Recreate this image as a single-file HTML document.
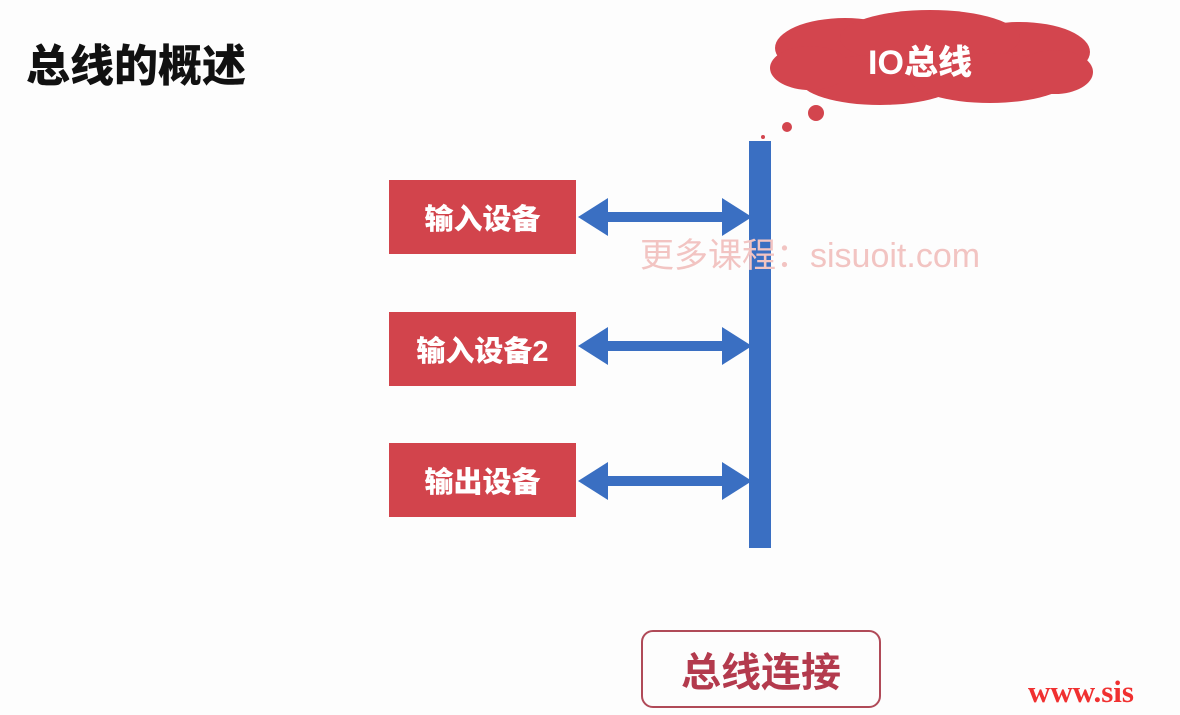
<!DOCTYPE html><html><head><meta charset="utf-8"><style>
body{margin:0;width:1180px;height:715px;background:#fdfdfd;position:relative;overflow:hidden;font-family:"Liberation Sans","Noto Sans CJK SC",sans-serif}
.t{position:absolute;left:26px;top:30px;font-size:44px;font-weight:900;color:#111}
.b{position:absolute;left:389px;width:187px;height:74px;background:#d2444c;color:#fff;font-weight:900;font-size:29px;display:flex;align-items:center;justify-content:center}
.bar{position:absolute;left:749px;top:141px;width:22px;height:407px;background:#3a6fc2}
.wm{position:absolute;left:640px;top:228px;font-size:34px;color:#f2c4c2}
.c{position:absolute;left:641px;top:630px;width:236px;height:74px;border:2px solid #b04a58;border-radius:12px;color:#b33a4d;font-size:40px;font-weight:700;display:flex;align-items:center;justify-content:center}
.w{position:absolute;left:1028px;top:674px;font-family:"Liberation Serif",serif;font-weight:700;font-size:31px;color:#f03030}
</style></head><body>
<div class="t">总线的概述</div>
<svg width="1180" height="715" style="position:absolute;left:0;top:0">
<g fill="#d3454e">
<ellipse cx="930" cy="62" rx="150" ry="30"/>
<ellipse cx="845" cy="48" rx="70" ry="30"/>
<ellipse cx="1020" cy="52" rx="70" ry="30"/>
<ellipse cx="930" cy="38" rx="90" ry="28"/>
<ellipse cx="880" cy="80" rx="80" ry="25"/>
<ellipse cx="990" cy="78" rx="80" ry="25"/>
<ellipse cx="810" cy="68" rx="40" ry="22"/>
<ellipse cx="1055" cy="72" rx="38" ry="22"/>
<circle cx="816" cy="113" r="8"/><circle cx="787" cy="127" r="5"/><circle cx="763" cy="137" r="2"/>
</g>
<text x="920" y="74" text-anchor="middle" fill="#fff" font-size="34" font-weight="900" font-family="Liberation Sans,Noto Sans CJK SC,sans-serif">IO总线</text>
<g fill="#3a6fc2">
<g id="a"><rect x="600" y="212" width="130" height="10"/><polygon points="578,217 608,198 608,236"/><polygon points="752,217 722,198 722,236"/></g>
<use href="#a" y="129"/><use href="#a" y="264"/>
</g>
</svg>
<div class="bar"></div>
<div class="b" style="top:180px">输入设备</div>
<div class="b" style="top:312px">输入设备2</div>
<div class="b" style="top:443px">输出设备</div>
<div class="wm">更多课程：sisuoit.com</div>
<div class="c">总线连接</div>
<div class="w">www.sis</div>
</body></html>
